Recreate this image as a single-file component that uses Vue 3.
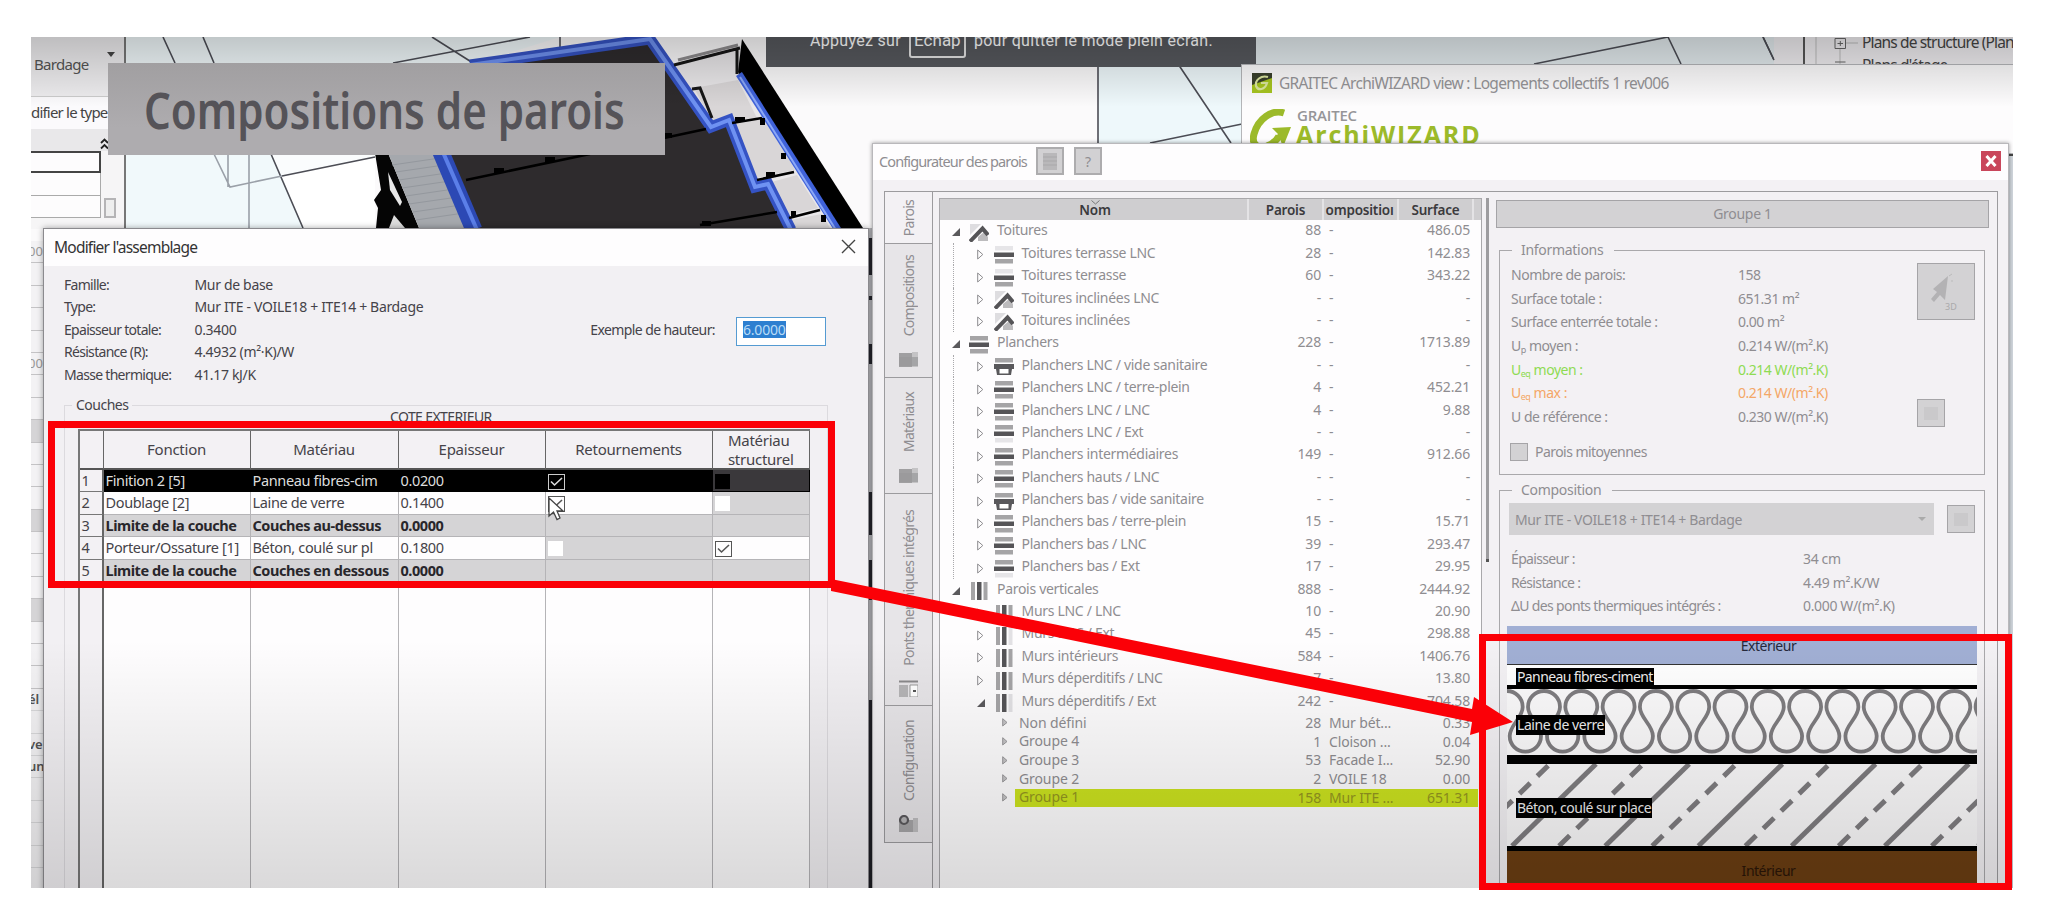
<script setup>
const facts = [
  ['Famille:', 'Mur de base'],
  ['Type:', 'Mur ITE - VOILE18 + ITE14 + Bardage'],
  ['Epaisseur totale:', '0.3400'],
  ['Résistance (R):', '4.4932 (m²·K)/W'],
  ['Masse thermique:', '41.17 kJ/K'],
]

const layers = [
  { n: 1, fn: 'Finition 2 [5]', mat: 'Panneau fibres-cim', ep: '0.0200', ret: 'on', str: 'off', kind: 'picked' },
  { n: 2, fn: 'Doublage [2]', mat: 'Laine de verre', ep: '0.1400', ret: 'on', str: 'off', kind: '' },
  { n: 3, fn: 'Limite de la couche', mat: 'Couches au-dessus', ep: '0.0000', ret: '', str: '', kind: 'limit' },
  { n: 4, fn: 'Porteur/Ossature [1]', mat: 'Béton, coulé sur pl', ep: '0.1800', ret: 'off', str: 'on', kind: '' },
  { n: 5, fn: 'Limite de la couche', mat: 'Couches en dessous', ep: '0.0000', ret: '', str: '', kind: 'limit' },
]

const tree = [
  [0, 'roof', 'Toitures', '88', '-', '486.05', true],
  [1, 'flatT', 'Toitures terrasse LNC', '28', '-', '142.83'],
  [1, 'flatT', 'Toitures terrasse', '60', '-', '343.22'],
  [1, 'roof', 'Toitures inclinées LNC', '-', '-', '-'],
  [1, 'roof', 'Toitures inclinées', '-', '-', '-'],
  [0, 'floor', 'Planchers', '228', '-', '1713.89', true],
  [1, 'void', 'Planchers LNC / vide sanitaire', '-', '-', '-'],
  [1, 'floor', 'Planchers LNC / terre-plein', '4', '-', '452.21'],
  [1, 'floor', 'Planchers LNC / LNC', '4', '-', '9.88'],
  [1, 'flatB', 'Planchers LNC / Ext', '-', '-', '-'],
  [1, 'floor', 'Planchers intermédiaires', '149', '-', '912.66'],
  [1, 'floor', 'Planchers hauts / LNC', '-', '-', '-'],
  [1, 'void', 'Planchers bas / vide sanitaire', '-', '-', '-'],
  [1, 'floor', 'Planchers bas / terre-plein', '15', '-', '15.71'],
  [1, 'floor', 'Planchers bas / LNC', '39', '-', '293.47'],
  [1, 'flatB', 'Planchers bas / Ext', '17', '-', '29.95'],
  [0, 'wall', 'Parois verticales', '888', '-', '2444.92', true],
  [1, 'wall', 'Murs LNC / LNC', '10', '-', '20.90'],
  [1, 'wallE', 'Murs LNC / Ext', '45', '-', '298.88'],
  [1, 'wall', 'Murs intérieurs', '584', '-', '1406.76'],
  [1, 'wall', 'Murs déperditifs / LNC', '7', '-', '13.80'],
  [1, 'wallE', 'Murs déperditifs / Ext', '242', '-', '704.58', true],
  [2, '', 'Non défini', '28', 'Mur bét...', '0.33'],
  [2, '', 'Groupe 4', '1', 'Cloison ...', '0.04'],
  [2, '', 'Groupe 3', '53', 'Facade I...', '52.90'],
  [2, '', 'Groupe 2', '2', 'VOILE 18', '0.00'],
  [2, '', 'Groupe 1', '158', 'Mur ITE ...', '651.31'],
].map(([level, icon, label, count, comp, area, open]) => ({ level, icon, label, count, comp, area, open }))

const tabs = [
  { label: 'Parois', cls: 't1', icon: '' },
  { label: 'Compositions', cls: 't2', icon: 'stack' },
  { label: 'Matériaux', cls: 't3', icon: 'stack' },
  { label: 'Ponts thermiques intégrés', cls: 't4', icon: 'bridge' },
  { label: 'Configuration', cls: 't5', icon: 'gear' },
]

const infos = [
  { l: 'Nombre de parois:', v: '158' },
  { l: 'Surface totale :', v: '651.31 m²' },
  { l: 'Surface enterrée totale :', v: '0.00 m²' },
  { l: 'U', s: 'p', r: ' moyen :', v: '0.214 W/(m².K)' },
  { l: 'U', s: 'eq', r: ' moyen :', v: '0.214 W/(m².K)', c: 'green' },
  { l: 'U', s: 'eq', r: ' max :', v: '0.214 W/(m².K)', c: 'orange' },
  { l: 'U de référence :', v: '0.230 W/(m².K)' },
]

const comp = [
  ['Épaisseur :', '34 cm'],
  ['Résistance :', '4.49 m².K/W'],
  ['ΔU des ponts thermiques intégrés :', '0.000 W/(m².K)'],
]

const step = 37.3
let wool = ''
for (let i = -1; i < 14; i++) {
  const u = 37 + i * step
  const m = i === -1 ? `M${u - 3} 47` : ''
  wool += `${m}C${u - 3} 36 ${u - 16} 29 ${u - 16} 18A16 16 0 0 1 ${u + 16} 18C${u + 16} 29 ${u + 3} 36 ${u + 3} 47A15.65 15.65 0 0 0 ${u + 34.3} 47`
}
const solids = [0, 1, 2, 3, 4, 5].map((i) => 5 + i * 93.2)
const dashes = [-1, 0, 1, 2, 3, 4, 5].map((i) => 52 + i * 93.2)

const gridRows = Array.from({ length: 29 }, (_, i) => ({ shade: [8, 12, 16].includes(i), text: { 0: '00', 5: '00', 20: 'él', 22: 've', 23: 'un' }[i] || '' }))
</script>

<template>
  <div class="stage">
    <div class="screen">
      <svg class="scene" viewBox="0 0 2052 924">
        <rect x="31" y="37" width="1982" height="851" fill="#fbfafb" />
        <path d="M126 37H560L480 62 375 157 282 176 303 228H126Z" fill="#f1f9fb" />
        <path d="M271 154L282 176 375 157V154Z" fill="#fafcfd" />
        <path d="M282 176L375 157V228H303Z" fill="#fff" />
        <path d="M1098 37H1242V143H1098Z" fill="#eef8fb" />
        <path d="M1256 37H1790V66H1256Z" fill="#e3ebee" />
        <g fill="none" stroke="#4c4d55" stroke-width="1.6">
          <path d="M163 37L175 63M203 37L214 63M271 154L303 228M282 176L375 157M432 37L473 63M393 63L530 37M560 37V52M1098 66V143M1166 46L1231 143M1150 143L1242 124M1534 64L1668 37 1681 64M1763 37L1774 60" />
          <path d="M214 154L230 187 282 176M228 154V187M249 154V228" stroke="#9aa0a8" />
        </g>
        <path d="M375 153H388L419 228H376L378 208 374 200 381 190Z" fill="#050505" />
        <path d="M388 172L402 202 400 206 390 190Z" fill="#e8e8e8" />
        <path d="M394 215L405 228H389Z" fill="#ddd" />
        <path d="M388 153H438L469 228H419Z" fill="#a5a8ad" />
        <path d="M392 165L440 158M396 172L444 165M399 180L447 173M402 188L450 181M406 196L454 189M409 204L458 197M413 212L461 205M416 220L464 213" stroke="#94989e" stroke-width="1" />
        <path d="M675 64L742 45 740 74 838 228H786L690 100Z" fill="#e9e7e9" />
        <path d="M694 88L738 80 757 118 712 122ZM735 124L768 118 795 170 757 178ZM768 183L797 175 818 208 790 215ZM790 220L822 214 830 228H792Z" fill="#d9d6d7" />
        <path d="M440 153L480 62 650 38 712 128 728 120 755 187 768 186 790 228H474Z" fill="#2e2b2d" />
        <path d="M440 150L474 230" stroke="#2c49b4" stroke-width="17" fill="none" />
        <path d="M442 150L477 230" stroke="#5b7fe8" stroke-width="4" fill="none" />
        <path d="M470 65L650 39 711 127 729 120 755 187 768 184 791 230" stroke="#3553c4" stroke-width="11" fill="none" />
        <path d="M470 65L650 39 711 127 729 120 755 187 768 184 791 230" stroke="#6f92f2" stroke-width="4" fill="none" />
        <path d="M742 39L863 228H838L738 72Z" fill="#000" />
        <path d="M674 65L740 48M737 50V74M692 89L700 88 712 118" stroke="#161616" stroke-width="3" fill="none" />
        <path d="M678 60L738 45" stroke="#8d8b8d" stroke-width="3" />
        <path d="M739 74L838 230" stroke="#3f62da" stroke-width="7" />
        <path d="M740 77L836 230" stroke="#8ca8f7" stroke-width="2" />
        <path d="M466 180L590 154M664 138L706 129M700 225L777 212M732 123L762 118M757 180L794 172M789 218L820 210" stroke="#000" stroke-width="2.6" fill="none" />
        <path d="M494 168h10v5h-10zM545 157h10v5h-10zM664 133h8v5h-8zM702 221h9v5h-9zM735 117h10v4h-10zM760 118h5v7h-5zM781 153h5v6h-5zM766 172h9v5h-9zM791 211h5v5h-5zM821 215h5v7h-5z" fill="#000" />
        <path d="M869 228V888" stroke="#b9b9be" stroke-width="8" />
        <path d="M870.5 238V275M870.5 296V300M870.5 344V364M870.5 492V535M870.5 560V600M870.5 700V888" stroke="#25252d" stroke-width="3" />
        <path d="M2009 156V888" stroke="#cfd5db" stroke-width="8" />
        <path d="M2009 155H2013" stroke="#444" stroke-width="2" />
        <path d="M1774 37H2013V64H1774Z" fill="#efedf0" />
        <path d="M1804 37V64" stroke="#555" stroke-width="2" />
        <path d="M1816 37V64M1840 48V64M1846 43H1858" stroke="#bbb" />
        <path d="M1763 37L1774 60" stroke="#4c4d55" stroke-width="1.6" />
        <path d="M1835 38.500H1845.500V48.500H1835ZM1837.500 43.500H1843M1840.300 41V46M1835 62H1845.500" stroke="#666" fill="none" />
      </svg>

      <div class="browser">
        <p>Plans de structure (Plan</p>
        <p>Plans d'étage</p>
      </div>

      <div class="props">
        <div class="family">Bardage<span class="caret"></span></div>
        <div class="edit">difier le type</div>
        <div class="fold">
          <svg width="9" height="12" viewBox="0 0 9 12"><path d="M1 5L4.500 1.500 8 5M1 10.500L4.500 7 8 10.500" fill="none" stroke="#222" stroke-width="1.800" /></svg>
        </div>
        <div class="cell first"></div>
        <div class="cell"></div>
        <div class="cell"></div>
        <span class="thumb"></span>
      </div>
      <div class="strip">
        <div v-for="(r, i) in gridRows" :key="i" :class="{ shade: r.shade, strong: i > 19 }">{{ r.text }}</div>
      </div>

      <div class="toast"><span>Appuyez sur</span><kbd>Échap</kbd><span>pour quitter le mode plein écran.</span></div>

      <section class="aw">
        <header>
          <svg width="20" height="20" viewBox="0 0 20 20"><rect width="20" height="20" fill="#39402c" /><path d="M0 20V12L20 5V20Z" fill="#a7c520" /><path d="M16 4C9 2 3 7 4 13 6 18 13 17 15 10H9" fill="none" stroke="#dbe6a0" stroke-width="2.200" /></svg>
          <span>GRAITEC ArchiWIZARD view : Logements collectifs 1 rev006</span>
        </header>
        <div class="brand">
          <svg width="42" height="42" viewBox="0 0 42 42"><path d="M34 4C22 0 8 10 4 25 1 36 8 40 17 37 22 35 27 31 29 27" fill="none" stroke="#9cba2a" stroke-width="7" /><path d="M22 19L41 18 33 38 30 30 25 33 23 30 28 25Z" fill="#9cba2a" /></svg>
          <div><small>GRAITEC</small><b>ArchiWIZARD</b></div>
        </div>
      </section>

      <section class="cfg">
        <header>
          <span class="cfg-title">Configurateur des parois</span>
          <button class="sq"><svg width="14" height="17" viewBox="0 0 14 17"><rect width="14" height="17" fill="#b9b8ba" /><path d="M0 4H14M0 8H14M0 12H14" stroke="#a9a8aa" /></svg></button>
          <button class="sq">?</button>
          <button class="shut"><svg width="12" height="12" viewBox="0 0 12 12"><path d="M1.500 1L10.500 11M10.500 1L1.500 11" stroke="#fff" stroke-width="3" /></svg></button>
        </header>
        <div class="pane">
          <nav>
            <div v-for="t in tabs" :key="t.label" class="tab" :class="t.cls">
              <span>{{ t.label }}</span>
              <svg v-if="t.icon" width="19" height="17" viewBox="0 0 19 17">
                <template v-if="t.icon === 'stack'"><path d="M0 3H13V17H0Z" fill="#a09fa1" /><path d="M13 2H19V17H13Z" fill="#c4c3c5" /><path d="M0 7H19V16H0Z" fill="#99989a" opacity=".7" /></template>
                <template v-else-if="t.icon === 'bridge'"><path d="M0 1.500H19" stroke="#8a898b" stroke-width="2" /><path d="M0 5H9V17H0Z" fill="#b5b4b6" /><path d="M11 5H19V17H11Z" fill="#fff" stroke="#999" /><path d="M14 11H17" stroke="#555" stroke-width="2" /></template>
                <template v-else><path d="M0 5H19V17H0Z" fill="#a5a4a6" /><path d="M14 3H19V17H14Z" fill="#bdbcbe" /><circle cx="5" cy="5" r="4" fill="#b5b4b6" stroke="#5a595c" stroke-width="2.200" /></template>
              </svg>
            </div>
          </nav>

          <div class="tree">
            <div class="thead"><b>Nom</b><b>Parois</b><b class="clip"><i>ompositioı</i></b><b>Surface</b><svg class="sort" width="9" height="5" viewBox="0 0 9 5"><path d="M.5 .5L4.500 4 8.500 .5" fill="none" stroke="#777" /></svg></div>
            <div v-for="r in tree" :key="r.label" class="trow" :class="['lv' + r.level, { sel: r.label === 'Groupe 1' }]">
              <div class="name">
                <span class="arrow">
                  <svg v-if="r.open" width="8" height="8" viewBox="0 0 8 8"><path d="M8 0V8H0Z" fill="#5a595c" /></svg>
                  <svg v-else-if="r.level === 1" width="7" height="11" viewBox="0 0 7 11"><path d="M.7 1L5.800 5.500 .7 10Z" fill="none" stroke="#8d8c8f" /></svg>
                  <svg v-else width="6" height="9" viewBox="0 0 6 9"><path d="M.7 .7L5 4.500 .7 8Z" fill="#c4c3c5" stroke="#99989b" /></svg>
                </span>
                <svg v-if="r.icon" class="ico" width="20" height="18" viewBox="0 0 20 18">
                  <template v-if="r.icon === 'roof'"><path d="M1 0H12L1 11Z" fill="#dedde0" /><path d="M9 13L15 8 19 13V17H9Z" fill="#bcbbbd" /><path d="M1 17.500L13.500 4.500 19 11" fill="none" stroke="#555457" stroke-width="4" /></template>
                  <template v-else-if="r.icon === 'wall' || r.icon === 'wallE'"><path d="M2 0H6V18H2Z" fill="#a5a4a6" /><path d="M8 0H12.500V18H8Z" fill="#555457" /><path d="M14.500 0H18.500V18H14.500Z" :fill="r.icon === 'wall' ? '#a5a4a6' : '#e2e1e4'" /></template>
                  <template v-else-if="r.icon === 'void'"><path d="M1 0H19V4.500H1Z" fill="#a5a4a6" /><path d="M0 6H20V11H18L17 17H3L2 11H0Z" fill="#59585b" /><path d="M5.500 11H14.500V15.500H5.500Z" fill="#fff" /></template>
                  <template v-else><path d="M1 0H19V4.500H1Z" :fill="r.icon === 'flatT' ? '#e6e5e8' : '#a5a4a6'" /><path d="M0 6.500H20V11H0Z" fill="#555457" /><path d="M1 13H19V17.500H1Z" :fill="r.icon === 'flatB' ? '#e6e5e8' : '#a5a4a6'" /></template>
                </svg>
                <span>{{ r.label }}</span>
              </div>
              <span class="num">{{ r.count }}</span><span class="cmp">{{ r.comp }}</span><span class="num">{{ r.area }}</span>
            </div>
          </div>
          <div class="split"></div>

          <div class="side">
            <div class="group-title">Groupe 1</div>
            <fieldset class="info">
              <legend>Informations</legend>
              <div class="info-body">
                <dl>
                  <div v-for="(r, i) in infos" :key="i" :class="r.c"><dt>{{ r.l }}<sub v-if="r.s">{{ r.s }}</sub>{{ r.r }}</dt><dd>{{ r.v }}</dd></div>
                </dl>
                <div class="tools">
                  <button class="big"><svg width="36" height="38" viewBox="0 0 36 38"><path d="M20 3L17 27 12 22 6 29 3 26 9 19 5 16Z" fill="#b3b2b4" /><path d="M21 3L24 1M23 8H25" stroke="#bbb" /><text x="17" y="37" class="deg">3D</text></svg></button>
                  <button class="small"><i></i></button>
                </div>
              </div>
              <label class="check"><i></i>Parois mitoyennes</label>
            </fieldset>
            <fieldset class="compo">
              <legend>Composition</legend>
              <div class="pick"><div class="select">Mur ITE - VOILE18 + ITE14 + Bardage<span class="caret"></span></div><button class="small"><i></i></button></div>
              <dl>
                <div v-for="r in comp" :key="r[0]"><dt>{{ r[0] }}</dt><dd>{{ r[1] }}</dd></div>
              </dl>
              <div class="section">
                <div class="ext">Extérieur</div>
                <div class="panel"><span class="tag">Panneau fibres-ciment</span></div>
                <div class="wool"><svg width="470" height="66" viewBox="0 0 470 66"><path :d="wool" fill="none" stroke="#7f7d80" stroke-width="3.800" /></svg><span class="tag">Laine de verre</span></div>
                <div class="beton">
                  <svg width="470" height="82" viewBox="0 0 470 82">
                    <path v-for="x in solids" :key="x" :d="`M${x} 82L${x + 84} 0`" stroke="#7f7d80" stroke-width="5" />
                    <path v-for="x in dashes" :key="x" :d="`M${x} 82L${x + 84} 0`" stroke="#7f7d80" stroke-width="5" stroke-dasharray="15 10" />
                  </svg>
                  <span class="tag">Béton, coulé sur place</span>
                </div>
                <div class="int">Intérieur</div>
              </div>
            </fieldset>
          </div>
        </div>
      </section>

      <section class="dlg">
        <header><span>Modifier l'assemblage</span><svg width="15" height="15" viewBox="0 0 15 15"><path d="M1 1L14 14M14 1L1 14" stroke="#444" stroke-width="1.400" /></svg></header>
        <div class="facts">
          <dl>
            <div v-for="f in facts" :key="f[0]"><dt>{{ f[0] }}</dt><dd>{{ f[1] }}</dd></div>
          </dl>
          <div class="sample"><span>Exemple de hauteur:</span><div class="input"><mark>6.0000</mark></div></div>
        </div>
        <fieldset class="layers">
          <legend>Couches</legend>
          <div class="ext-label">COTE EXTERIEUR</div>
          <div class="table">
            <div class="lr lhead"><div></div><div>Fonction</div><div>Matériau</div><div>Epaisseur</div><div>Retournements</div><div><span>Matériau<br>structurel</span></div></div>
            <div v-for="l in layers" :key="l.n" class="lr" :class="l.kind">
              <div class="n">{{ l.n }}</div><div>{{ l.fn }}</div><div>{{ l.mat }}</div><div>{{ l.ep }}</div>
              <div :class="{ dis: l.ret === 'off' }"><span v-if="l.ret" class="box" :class="l.ret"><svg v-if="l.ret === 'on'" width="13" height="10" viewBox="0 0 13 10"><path d="M1 4.500L4.500 8 12 1" fill="none" stroke="currentColor" stroke-width="1.600" /></svg></span></div>
              <div :class="{ dis: l.str === 'off' }"><span v-if="l.str" class="box" :class="l.str"><svg v-if="l.str === 'on'" width="13" height="10" viewBox="0 0 13 10"><path d="M1 4.500L4.500 8 12 1" fill="none" stroke="currentColor" stroke-width="1.600" /></svg></span></div>
            </div>
            <div class="lr rest"><div></div><div></div><div></div><div></div><div></div><div></div></div>
          </div>
        </fieldset>
      </section>

      <svg class="cursor" width="16" height="26" viewBox="0 0 16 26"><path d="M1 1V19L5.500 15 9 22.500 12 21 9 14H15Z" fill="#fff" stroke="#444" stroke-width="1.300" /></svg>
      <div class="shade-top"></div>
      <div class="shade-bottom"></div>
      <div class="banner"><span>Compositions de parois</span></div>
    </div>

    <div class="mark left"></div>
    <div class="mark right"></div>
    <svg class="link" viewBox="0 0 2052 924"><path d="M831 579L1472 709 1474 697 1513 722 1470 735 1472 722 831 591Z" fill="#fb0007" /></svg>
  </div>
</template>

<style>
body { margin: 0; background: #fff; }
</style>

<style scoped>
.stage { position: relative; width: 2052px; height: 924px; overflow: hidden; background: #fff; font-family: "Noto Sans", "Open Sans", sans-serif; }
.stage * { box-sizing: border-box; }
.screen { position: absolute; inset: 0; clip-path: inset(37px 39px 36px 31px); }
.scene, .link { position: absolute; inset: 0; width: 2052px; height: 924px; }
dl, dd, p, fieldset { margin: 0; padding: 0; border: 0; }
button { padding: 0; font: inherit; color: inherit; }
i { font-style: normal; }

.browser { position: absolute; left: 1862px; top: 31px; height: 33px; overflow: hidden; font-size: 15.5px; line-height: 22px; color: #444; white-space: nowrap; letter-spacing: -.85px; }
.browser p { height: 23px; }

.props { position: absolute; left: 31px; top: 37px; width: 95px; height: 192px; background: #f6f5f6; border-right: 2px solid #777; font-size: 15px; color: #555; letter-spacing: -.7px; }
.family { height: 60px; padding: 13px 4px 0 3px; display: flex; gap: 18px; line-height: 28px; border-bottom: 1px solid #ccc; background: #eeedef; }
.caret { width: 0; height: 0; border: 4px solid transparent; border-top: 5px solid #444; border-bottom: 0; }
.family .caret { margin-top: 2px; }
.edit { height: 32px; line-height: 30px; color: #444; white-space: nowrap; background: #fbfafc; letter-spacing: -.8px; }
.fold { height: 22px; padding: 5px 0 0 69px; background: #e9e8ea; }
.cell { width: 70px; height: 22.400px; border: 1px solid #aaa; border-width: 0 1px 1px 0; background: #fdfcfd; }
.cell.first { border: 2px solid #444; border-left: 0; }
.thumb { position: absolute; left: 73px; top: 161px; width: 12px; height: 20px; border: 2px solid #b5b4b6; background: #eee; }
.strip { position: absolute; left: 31px; top: 241px; width: 13px; overflow: hidden; background: #f3f2f4; font-size: 13px; color: #999; }
.strip div { height: 22.400px; line-height: 21px; border-bottom: 1px solid #c4c3c5; text-indent: -3px; }
.strip .shade { background: #d5d4d6; }
.strip .strong { color: #555; font-weight: 600; border-color: #d8d8da; }

.toast { position: absolute; left: 766px; top: 30px; width: 490px; height: 37px; padding-left: 44px; display: flex; gap: 8px; background: #56585d; color: #fff; font: 16px/21px Roboto, sans-serif; white-space: nowrap; }
.toast span { letter-spacing: .3px; }
.toast kbd { width: 57px; height: 28px; border: 2px solid #e6e6e6; border-radius: 3px; font: 17px/17px Roboto, sans-serif; text-align: center; }

.aw { position: absolute; left: 1241px; top: 64px; width: 780px; height: 90px; background: #fdfcfd; border: 1px solid #b5b6b9; }
.aw header { display: flex; align-items: center; gap: 7px; padding: 7px 10px 0; height: 28px; font-size: 15.500px; color: #969598; letter-spacing: -.67px; white-space: nowrap; }
.brand { display: flex; gap: 4px; padding: 15px 0 0 8px; }
.brand svg { margin-top: 1px; }
.brand div { display: flex; flex-direction: column; }
.brand small { font: 600 15px/15px "Open Sans", sans-serif; color: #969598; padding-left: 1px; letter-spacing: -.2px; }
.brand b { font: 700 25px/22px "Open Sans", sans-serif; color: #9cba2a; letter-spacing: 1.900px; }

.cfg { position: absolute; left: 872px; top: 143px; width: 1137px; height: 760px; background: #f3f1f4; border: 1px solid #b9b8bb; box-shadow: 0 0 4px rgba(0, 0, 0, .4); color: #8f8d91; font-size: 14px; letter-spacing: -.3px; }
.cfg > header { display: flex; height: 36px; padding: 3px 7px 0 6px; background: #fefdfe; }
.cfg-title { width: 157px; line-height: 28px; font-size: 14.500px; letter-spacing: -.9px; white-space: nowrap; }
.sq { width: 28px; height: 28px; margin-right: 10px; border: 2px solid #adacae; background: #d2d1d3; display: grid; place-items: center; }
.shut { width: 20px; height: 20px; margin: 4px 0 0 auto; border: 0; background: #c9465b; display: grid; place-items: center; }
.pane { display: flex; width: 1114px; height: 740px; margin: 11px 0 0 11px; border: 1px solid #9c9b9e; border-left: 0; }
nav { width: 49px; border-right: 1.500px solid #9c9b9e; }
.tab { display: flex; flex-direction: column; align-items: center; justify-content: flex-end; gap: 14px; border: 1px solid #9c9b9e; border-width: 0 0 1.500px 1px; background: #e7e5e8; font-size: 14px; letter-spacing: -.75px; }
.tab span { writing-mode: vertical-rl; transform: rotate(180deg); line-height: 20px; white-space: nowrap; }
.t1 { height: 52px; padding-bottom: 7px; background: #f3f1f4; }
.t2 { height: 134px; padding-bottom: 10px; }
.t3 { height: 116px; padding-bottom: 10px; }
.t4 { height: 212px; padding-bottom: 8px; }
.t5 { height: 137px; padding-bottom: 10px; }

.tree { width: 543px; margin: 6px 0 0 6px; border: 1px solid #a9a8ab; border-bottom: 0; background: #fefdfe; letter-spacing: -.15px; }
.thead { position: relative; display: grid; grid-template-columns: 309px 1fr 1fr 1fr 7px; height: 21.400px; background: #cfced0; color: #3b3a3d; font-size: 13.500px; line-height: 22px; text-align: center; }
.thead b { font-weight: 600; border-right: 2px solid #e4e3e5; overflow: hidden; letter-spacing: -.2px; }
.thead b:first-child { padding-left: 3px; }
.clip i { display: block; margin-left: -2px; }
.sort { position: absolute; left: 151px; top: 1px; }
.trow { display: grid; grid-template-columns: 310px 71px 84px 65px; height: 22.400px; line-height: 20px; position: relative; white-space: nowrap; }
.name { display: flex; height: 20px; align-items: center; padding-left: 12px; letter-spacing: -.3px; }
.lv1 .name { padding-left: 36.500px; }
.lv2 .name { padding-left: 62px; height: 18px; letter-spacing: -.1px; }
.lv1::before { content: ""; position: absolute; left: 13px; top: 0; height: 100%; border-left: 1.500px dotted #aaa9ac; }
.trow:nth-child(n+18)::before { display: none; }
.arrow { width: 17px; display: flex; padding-top: 4px; }
.lv2 .arrow { padding-top: 0; }
.ico { margin: 5px 8px 0 0; }
.lv2 { height: 18.670px; line-height: 18.670px; top: 1px; }
.sel { background: linear-gradient(#cbe21f, #cbe21f) 75px 0 / 463px 100% no-repeat; color: #94961f; }
.num { text-align: right; }
.cmp { padding-left: 8px; }
.split { width: 3px; height: 364px; margin: 6px 0 0 4px; background: #9d9c9f; border-bottom: 3px solid #555; }

.side { margin: 8px 0 0 7px; width: 493px; letter-spacing: -.48px; }
.group-title { height: 28px; border: 1.500px solid #a5a4a7; background: #d3d2d4; text-align: center; line-height: 26px; letter-spacing: -.3px; }
.side fieldset { margin-left: 3px; width: 486px; border: 1.500px solid #a9a8ab; }
legend { height: 16px; line-height: 16px; margin-left: 12px; padding: 0 11px 0 9px; letter-spacing: -.3px; }
.info { height: 233px; margin-top: 14px; }
.info-body { display: flex; justify-content: space-between; padding: 5px 9px 0 11px; }
.info dl div { display: flex; height: 23.650px; line-height: 23.650px; white-space: nowrap; }
.info dt { width: 227px; }
sub { font-size: 9px; line-height: 0; vertical-align: -2px; }
.green { color: #8edb52; }
.orange { color: #f3a767; }
.tools { display: flex; flex-direction: column; justify-content: space-between; width: 58px; height: 164px; }
.big { width: 58px; height: 57px; border: 1.500px solid #a5a4a7; background: #d3d2d4; display: grid; place-items: center; }
.deg { font-size: 9px; fill: #aaa9ab; }
.small { width: 28px; height: 28px; border: 1.500px solid #a5a4a7; background: #d3d2d4; display: grid; place-items: center; flex: none; }
.small i { width: 14px; height: 13px; background: #cac9cb; }
.check { display: flex; align-items: center; gap: 7px; padding: 14px 0 0 10px; letter-spacing: -.55px; }
.check i { width: 18px; height: 18px; border: 1.500px solid #a5a4a7; background: #d3d2d4; }
.compo { height: 460px; margin-top: 7px; }
.pick { display: flex; gap: 13px; align-items: center; padding: 5px 0 0 9px; }
.select { width: 425px; height: 32px; padding: 0 8px 0 6px; display: flex; align-items: center; justify-content: space-between; background: #d3d2d4; letter-spacing: -.38px; }
.select .caret { border-width: 4px 4px 0; border-top-color: #aaa; }
.compo dl { padding: 12px 0 0 11px; letter-spacing: -.65px; }
.compo dl div { display: flex; height: 23.650px; line-height: 23.650px; }
.compo dt { width: 292px; }
.compo dd { letter-spacing: -.35px; }
.section { width: 470px; margin: 8px 0 0 7px; color: #25283a; }
.ext { height: 39px; padding-left: 53px; line-height: 39px; text-align: center; background: #a1afd4; border-bottom: 1.500px solid #333; }
.panel { height: 24px; padding: 3px 0 0 9px; background: #fff; border-bottom: 4px solid #000; }
.tag { display: block; width: max-content; height: 18px; padding: 0 1px; line-height: 17px; background: #000; color: #eee; position: relative; white-space: nowrap; letter-spacing: -.6px; }
.wool, .beton { display: grid; background: #fbfafb; }
.wool > *, .beton > * { grid-area: 1 / 1; }
.wool { height: 75px; border-bottom: 9px solid #000; }
.wool .tag { margin: 26px 0 0 9px; height: 20px; line-height: 19px; letter-spacing: -.45px; }
.beton { height: 87px; border-bottom: 5px solid #000; }
.beton .tag { margin: 34px 0 0 9px; height: 20px; line-height: 19px; letter-spacing: -.5px; }
.int { height: 60px; padding-left: 53px; line-height: 40px; text-align: center; background: #6b3e12; color: #2a1508; }

.dlg { position: absolute; left: 43px; top: 228px; width: 826px; height: 680px; background: #f2f0f3; border: 1px solid #8b8a8e; box-shadow: 0 0 6px rgba(0, 0, 0, .35); color: #454349; font-size: 14px; letter-spacing: -.7px; }
.dlg header { display: flex; justify-content: space-between; align-items: flex-start; height: 37px; padding: 3px 12px 0 10px; background: #fefdfe; font-size: 15.500px; line-height: 31px; color: #333; letter-spacing: -.78px; }
.dlg header svg { margin-top: 7px; }
.facts { display: flex; justify-content: space-between; padding: 8px 42px 0 20px; height: 130px; }
.facts dl div { display: flex; height: 22.400px; line-height: 22.400px; white-space: nowrap; }
.facts dt { width: 130.500px; }
.facts dd { letter-spacing: -.33px; }
.sample { display: flex; gap: 21px; height: 29px; margin-top: 43px; line-height: 26px; letter-spacing: -.6px; }
.input { width: 90px; height: 29px; padding: 3px 6px; border: 1.500px solid #559bd2; background: #fff; line-height: 0; }
mark { display: inline-block; height: 17px; line-height: 17px; background: #2d7fd0; color: #b9dcf7; letter-spacing: -.2px; }
.layers { width: 764px; height: 520px; margin-left: 20px; border: 1px solid #dcdade; }
.layers legend { margin-left: 7px; padding: 0 4px; height: 18px; line-height: 18px; letter-spacing: -.5px; }
.ext-label { height: 18px; line-height: 14px; margin-top: -4px; padding: 0 0 0 325px; letter-spacing: -.6px; }
.table { width: 732.500px; margin: 1px 0 0 12.500px; border-left: 2px solid #777; font-size: 14.500px; letter-spacing: -.35px; }
.lr { display: grid; grid-template-columns: 24px 147px 148px 147px 167px 97.500px; height: 22.400px; }
.lr > div { padding-left: 2px; line-height: 20px; border: 1px solid #b5b4b7; border-width: 0 1px 1px 0; background: #fefdfe; white-space: nowrap; overflow: hidden; }
.lr > .n { background: #f3f1f4; border-right: 2px solid #666; border-bottom: 1.500px solid #777; }
.lhead { height: 41px; border-top: 2px solid #777; }
.lr.lhead > div { display: grid; place-items: center; padding: 0; background: #f3f1f4; border-right: 1.500px solid #666; border-bottom: 2px solid #555; font-size: 15px; line-height: 18.500px; letter-spacing: -.25px; }
.picked > div:not(.n) { background: #000; border-color: #000; color: #ddd; }
.picked > .dis { background: #3a383b !important; }
.limit > div:not(.n) { background: #d5d4d6; font-weight: 700; color: #28262b; letter-spacing: -.45px; }
.lr > .dis { background: #d5d4d6; }
.box { display: grid; place-items: center; width: 17px; height: 16px; margin-top: 4px; border: 1.500px solid #555; color: #555; }
.picked .box { border-color: #ccc; color: #ddd; }
.box.off { width: 15px; height: 15px; margin-top: 4px; border: 0; background: #fff; }
.picked .box.off { background: #000; }
.rest { height: 330px; }
.rest > div:first-child { background: #f3f1f4; border-right: 2px solid #666; }

.cursor { position: absolute; left: 548px; top: 497px; }
.shade-top, .shade-bottom { position: absolute; left: 0; right: 0; pointer-events: none; }
.shade-top { top: 37px; height: 70px; background: linear-gradient(rgba(0, 0, 0, .2), transparent); }
.shade-bottom { top: 640px; height: 248px; background: linear-gradient(transparent, rgba(0, 0, 0, .14)); }
.banner { position: absolute; left: 108px; top: 63px; width: 557px; height: 92px; padding-left: 36px; overflow: hidden; background: linear-gradient(#a19fa1, #aeacaf 70%); color: #555358; font: 600 50px/94px "Noto Sans", sans-serif; white-space: nowrap; }
.banner span { display: inline-block; transform: scaleX(.842); transform-origin: 0 50%; }

.mark { position: absolute; border: 7px solid #fb0007; }
.mark.left { left: 48px; top: 421px; width: 787px; height: 167px; }
.mark.right { left: 1479px; top: 634px; width: 533px; height: 256px; }
</style>
